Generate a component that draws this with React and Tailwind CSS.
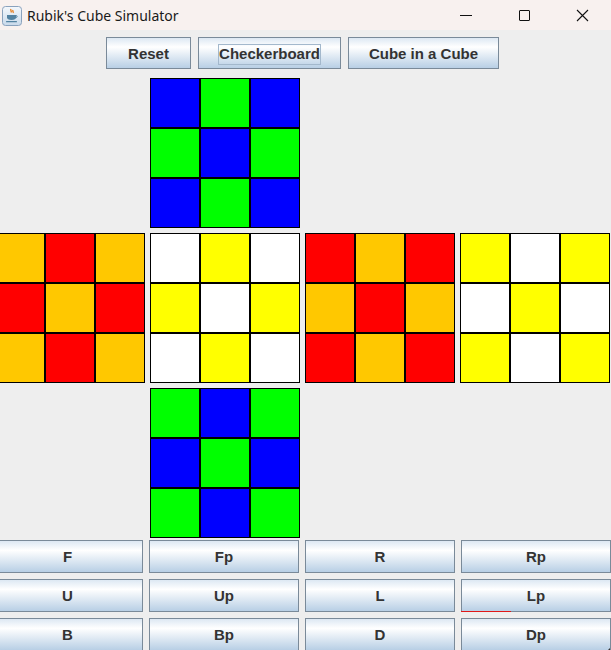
import React from "react";

const C = {
  B: "bg-[#0000ff]",
  G: "bg-[#00ff00]",
  W: "bg-[#ffffff]",
  Y: "bg-[#ffff00]",
  R: "bg-[#ff0000]",
  O: "bg-[#ffc800]",
};

function Face({ cells, hidden }) {
  if (hidden) return <div className="w-[150px] h-[150px] shrink-0" />;
  return (
    <div className="w-[150px] h-[150px] shrink-0 grid grid-cols-3 grid-rows-3">
      {cells.map((c, i) => (
        <div key={i} className={`border border-black ${C[c]}`} />
      ))}
    </div>
  );
}

const btn =
  "border border-[#7a8a99] bg-[linear-gradient(to_bottom,#dde8f3_0%,#ffffff_30%,#b8cfe5_100%)] text-[#333333] font-bold text-[15px] flex items-center justify-center shrink-0 pt-[2px]";

function JavaIcon() {
  return (
    <svg width="20" height="20" viewBox="0 0 20 20" className="shrink-0">
      <defs>
        <linearGradient id="jg" x1="0" y1="0" x2="0" y2="1">
          <stop offset="0" stopColor="#f4f8fc" />
          <stop offset="1" stopColor="#c9d9ea" />
        </linearGradient>
      </defs>
      <rect x="0.5" y="0.5" width="19" height="19" rx="3" fill="url(#jg)" stroke="#8aa2bd" />
      <path d="M9 3c-1 1.5 1 2 0 3.5M11 4c-0.8 1.2 0.8 1.6 0 2.8" stroke="#e76f00" strokeWidth="1.2" fill="none" />
      <path d="M5 9h9v2.5c0 1.5-1.5 2.5-4.5 2.5S5 13 5 11.5z" fill="#5382a1" />
      <path d="M14 9.5c1.5 0 1.5 2 0 2" stroke="#5382a1" strokeWidth="1" fill="none" />
      <rect x="4" y="15" width="11" height="1.3" rx="0.6" fill="#5382a1" />
    </svg>
  );
}

export default function App() {
  const U = ["B", "G", "B", "G", "B", "G", "B", "G", "B"];
  const L = ["O", "R", "O", "R", "O", "R", "O", "R", "O"];
  const F = ["W", "Y", "W", "Y", "W", "Y", "W", "Y", "W"];
  const Rr = ["R", "O", "R", "O", "R", "O", "R", "O", "R"];
  const Bk = ["Y", "W", "Y", "W", "Y", "W", "Y", "W", "Y"];
  const D = ["G", "B", "G", "B", "G", "B", "G", "B", "G"];

  const rows = [
    ["F", "Fp", "R", "Rp"],
    ["U", "Up", "L", "Lp"],
    ["B", "Bp", "D", "Dp"],
  ];

  return (
    <div
      className="w-[611px] h-[650px] overflow-hidden flex flex-col bg-[#eeeeee]"
      style={{ fontFamily: '"Liberation Sans", Arial, sans-serif' }}
    >
      {/* Title bar */}
      <div className="h-[30px] shrink-0 bg-[#f8f1ef] flex items-center">
        <div className="pl-[2px] pr-[5px] pt-[1px]">
          <JavaIcon />
        </div>
        <div
          className="text-[14px] text-[#1a1a1a]"
          style={{ fontFamily: '"Noto Sans", "Open Sans", sans-serif' }}
        >
          Rubik's Cube Simulator
        </div>
        <div className="ml-auto flex items-center h-full">
          <div className="w-[58px] h-full flex items-center justify-center">
            <div className="w-[12px] h-[1px] bg-[#111]" />
          </div>
          <div className="w-[58px] h-full flex items-center justify-center">
            <div className="w-[11px] h-[11px] border border-[#111] rounded-[1px]" />
          </div>
          <div className="w-[58px] h-full flex items-center justify-center">
            <svg width="13" height="13" viewBox="0 0 13 13">
              <path d="M1 1L12 12M12 1L1 12" stroke="#111" strokeWidth="1.1" />
            </svg>
          </div>
        </div>
      </div>

      {/* Top buttons */}
      <div className="flex gap-[7px] pl-[106px] mt-[7px] h-[32px] shrink-0">
        <div className={`${btn} w-[85px]`}>Reset</div>
        <div className={`${btn} w-[143px]`}>
          <div className="border border-[#a3b8cc] w-[103px] h-[21px] flex items-center justify-center">
            Checkerboard
          </div>
        </div>
        <div className={`${btn} w-[151px]`}>Cube in a Cube</div>
      </div>

      {/* Cube net */}
      <div className="flex flex-col gap-[5px] mt-[9px] ml-[-5px] shrink-0">
        <div className="flex gap-[5px]">
          <Face hidden />
          <Face cells={U} />
        </div>
        <div className="flex gap-[5px]">
          <Face cells={L} />
          <Face cells={F} />
          <Face cells={Rr} />
          <Face cells={Bk} />
        </div>
        <div className="flex gap-[5px]">
          <Face hidden />
          <Face cells={D} />
        </div>
      </div>

      {/* Move buttons */}
      <div className="flex flex-col gap-[6px] mt-[2px] ml-[-8px] shrink-0">
        {rows.map((r, ri) => (
          <div key={ri} className="flex gap-[6px] h-[33px]">
            {r.map((label, ci) => (
              <div
                key={label}
                className={`${btn} relative ${ci === 0 ? "w-[151px]" : "w-[150px]"}`}
              >
                {label}
                {label === "Lp" && (
                  <div className="absolute left-[-1px] bottom-[-1px] w-[50px] h-[1px] bg-[#e01818]" />
                )}
                {label === "Dp" && (
                  <svg
                    width="6"
                    height="6"
                    viewBox="0 0 6 6"
                    className="absolute right-0 bottom-[-4px]"
                  >
                    <path d="M6 0L6 6L0 6z" fill="#333" />
                  </svg>
                )}
              </div>
            ))}
          </div>
        ))}
      </div>
    </div>
  );
}
